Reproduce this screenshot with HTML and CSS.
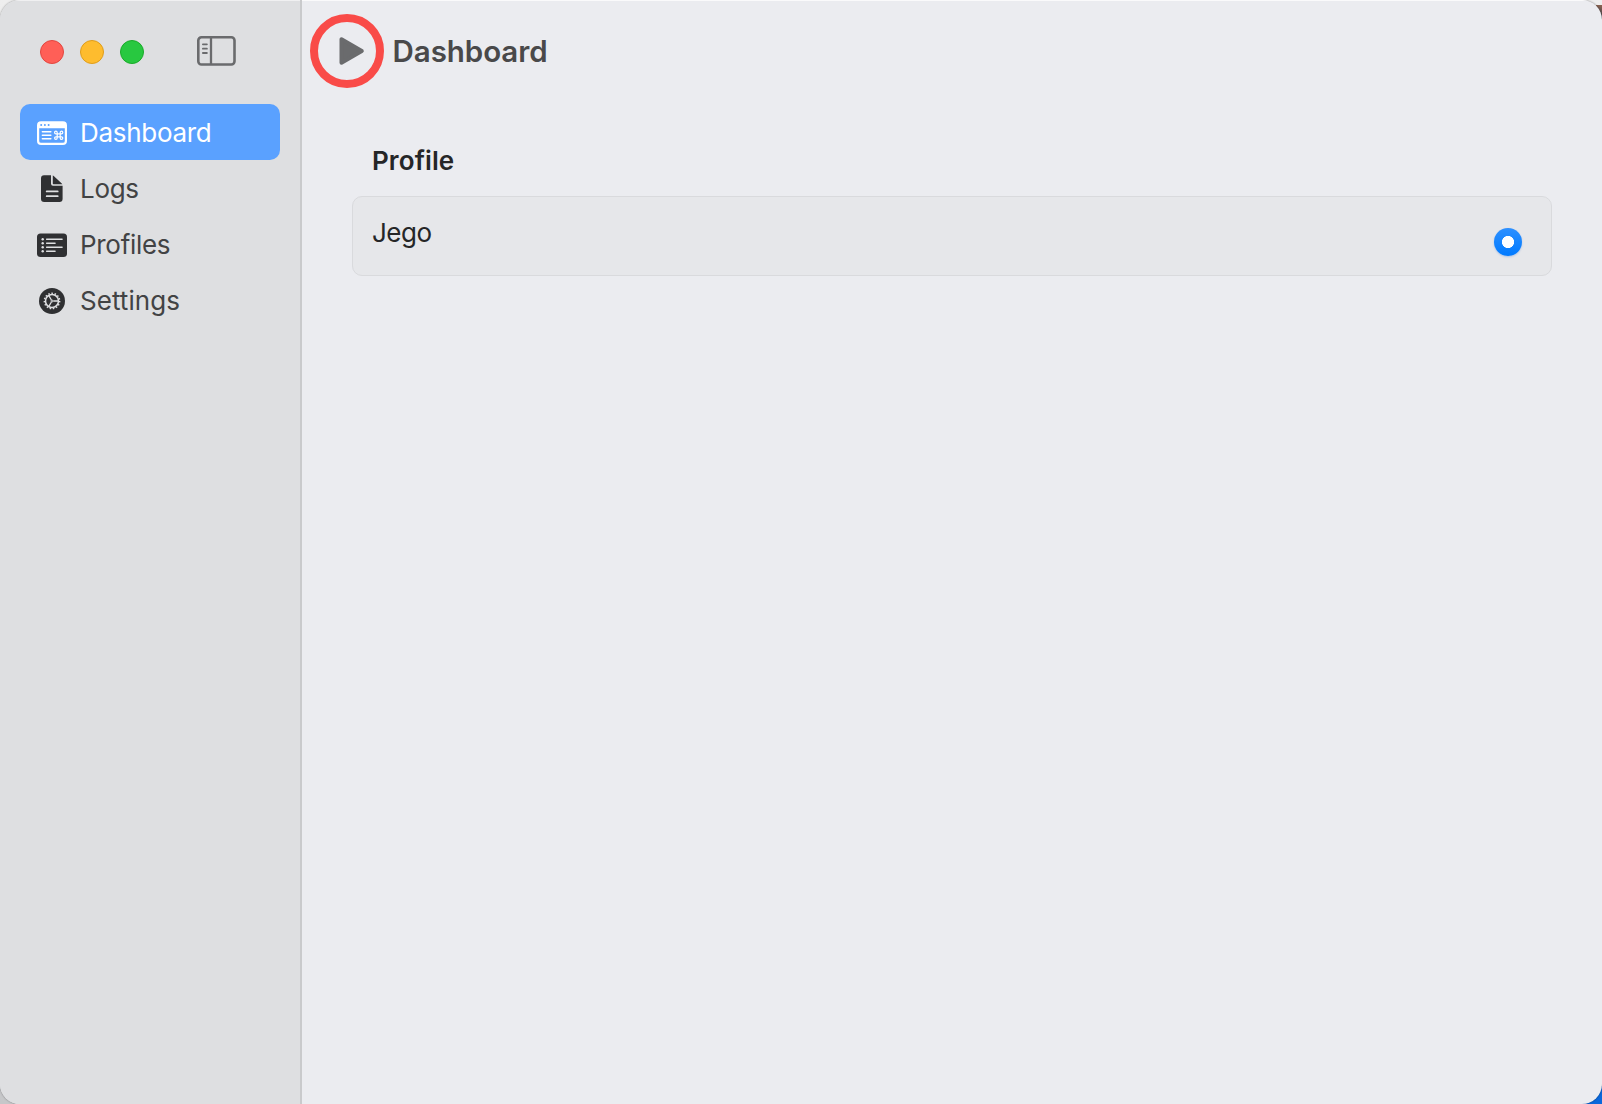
FILE: index.html
```html
<!DOCTYPE html>
<html lang="en">
<head>
<meta charset="utf-8">
<title>Dashboard</title>
<link rel="stylesheet" href="styles.css">
</head>
<body>
<div class="window">
  <aside class="sidebar">
    <div class="controls">
      <span class="light close"></span>
      <span class="light minimize"></span>
      <span class="light zoom"></span>
      <svg class="toggle" width="40" height="32" viewBox="0 0 40 32" fill="none" stroke="#6a6b6d">
        <rect x="2.3" y="2.3" width="36.2" height="27.2" rx="3.2" stroke-width="2.6"/>
        <path d="M15 2v28" stroke-width="2.3"/>
        <path d="M6.9 9.3h4M6.9 13.7h4M6.9 18h4" stroke-width="1.8" stroke-linecap="round"/>
      </svg>
    </div>
    <nav class="menu">
      <a class="item active">
        <svg class="icon" width="30" height="30" viewBox="0 0 30 30">
          <rect x="1.1" y="4.4" width="27.8" height="21.5" rx="3" fill="none" stroke="#fff" stroke-width="2.2"/>
          <path d="M1 10.2V7q0-3 3-3h22q3 0 3 3v3.2z" fill="#fff"/>
          <g fill="#5aa1ff"><circle cx="4.2" cy="6.9" r="1"/><circle cx="7.9" cy="6.9" r="1"/><circle cx="11.600" cy="6.900" r="1"/></g>
          <path d="M5.400 13.800h8.400M5.400 17.300h8.400M5.400 20.800h8.400" stroke="#fff" stroke-width="1.600" stroke-linecap="round"/>
          <path d="M20.200 15.800h3v3h-3zM20.200 15.800h-1.300a1.300 1.300 0 1 1 1.300-1.300zM23.200 15.800h1.300a1.300 1.300 0 1 0-1.300-1.300zM20.200 18.800h-1.300a1.300 1.300 0 1 0 1.300 1.300zM23.200 18.800h1.300a1.300 1.300 0 1 1-1.300 1.300z" fill="none" stroke="#fff" stroke-width="1.200"/>
        </svg>
        <span class="wide">Dashboard</span>
      </a>
      <a class="item">
        <svg class="icon" width="30" height="30" viewBox="0 0 30 30">
          <path d="M7 1.200h7v8.600q0 2 2 2h9.600v13q0 3.300-3.200 3.300H7.200Q4 28.100 4 24.800V4.400Q4 1.200 7 1.200z" fill="#2f3032"/>
          <path d="M15.800 1.400q.6.200 1.200.8l7.500 7q.6.500.8 1H16.500q-.7 0-.7-.7z" fill="#2f3032"/>
          <path d="M9.700 17.400h11M9.700 22.200h11" stroke="#dedfe1" stroke-width="1.800" stroke-linecap="round"/>
        </svg>
        <span>Logs</span>
      </a>
      <a class="item">
        <svg class="icon" width="30" height="30" viewBox="0 0 30 30">
          <rect y="3.500" width="30" height="23.500" rx="3.500" fill="#2f3032"/>
          <path d="M9.600 9.300h15.500M9.600 13.300h8.500M9.600 17.300h15.500M9.600 21.300h8.500" stroke="#dedfe1" stroke-width="1.400" stroke-linecap="round"/>
          <g fill="#dedfe1"><circle cx="5.700" cy="9.300" r="1.200"/><circle cx="5.700" cy="13.300" r="1.200"/><circle cx="5.700" cy="17.300" r="1.200"/><circle cx="5.700" cy="21.300" r="1.200"/></g>
        </svg>
        <span>Profiles</span>
      </a>
      <a class="item">
        <svg class="icon" width="30" height="30" viewBox="0 0 30 30">
          <circle cx="15" cy="15" r="13" fill="#2f3032"/>
          <g fill="none" stroke="#dedfe1">
            <circle cx="15" cy="15" r="7.700" stroke-width="1.400" stroke-dasharray="1.500 1.725"/>
            <circle cx="15" cy="15" r="6.500" stroke-width="1.500"/>
            <circle cx="15" cy="15" r="1" stroke-width="1"/>
            <path d="M16.300 15h5M14.400 14l-2.700-4.600M14.400 16l-2.700 4.600" stroke-width="1.300"/>
          </g>
        </svg>
        <span class="settings">Settings</span>
      </a>
    </nav>
  </aside>
  <main class="content">
    <header class="toolbar">
      <span class="run">
        <svg width="28" height="32" viewBox="0 0 28 32"><path d="M3.500 4.300v23.400l20.300-11.700z" fill="#6a6b6d" stroke="#6a6b6d" stroke-width="4" stroke-linejoin="round"/></svg>
      </span>
      <h1 class="title">Dashboard</h1>
    </header>
    <section class="group">
      <h2 class="heading">Profile</h2>
      <div class="card">
        <span class="name">Jego</span>
        <span class="radio"></span>
      </div>
    </section>
  </main>
</div>
</body>
</html>
```
FILE: styles.css
```css
* { box-sizing: border-box; }
body {
  margin: 0;
  background:
    linear-gradient(#0a68dc, #0a68dc) right bottom / 20px 18px no-repeat,
    linear-gradient(#8a6352, #39414f) right 5px / 6px 14px no-repeat,
    linear-gradient(#eeeeee, #c6c7c9);
  font-family: Inter, "Liberation Sans", sans-serif;
}
.window {
  display: flex;
  width: 1602px;
  height: 1104px;
  overflow: hidden;
  border-radius: 20px;
  background: #ebecf0;
  box-shadow: 0 0 2px rgba(0, 0, 0, .45);
}
.sidebar {
  width: 302px;
  padding: 35px 20px 0;
  background: #dedfe1;
  border-right: 2px solid #c9cacc;
  box-shadow: inset 0 1px 0 #f0f0f1;
}
.controls {
  display: flex;
  align-items: center;
  gap: 16px;
  height: 34px;
  padding-left: 20px;
}
.light {
  width: 24px;
  height: 24px;
  border: 1px solid;
  border-radius: 50%;
}
.close { background: #ff5f57; border-color: #e2463f; }
.minimize { background: #febc2e; border-color: #df9d1b; }
.zoom { background: #28c840; border-color: #1aab29; }
.toggle { margin: -3px 0 0 36px; }
.menu { margin-top: 35px; }
.item {
  display: flex;
  align-items: center;
  gap: 13px;
  width: 260px;
  height: 56px;
  padding: 2px 17px 0;
  border-radius: 10px;
  color: #424344;
  font-size: 26px;
  letter-spacing: -.3px;
  line-height: 32px;
}
.item.active { background: #5aa1ff; color: #fff; }
.settings { letter-spacing: .05px; }
.content {
  flex: 1;
  box-shadow: inset 0 1px 0 #fafafb;
}
.toolbar {
  display: flex;
  align-items: center;
  gap: 8.5px;
  height: 102px;
  padding-left: 8px;
}
.run {
  display: flex;
  align-items: center;
  justify-content: center;
  width: 74px;
  height: 74px;
  padding-left: 10px;
  border: 8px solid #f94b48;
  border-radius: 50%;
}
.title {
  margin: 0;
  color: #49494a;
  font-size: 29.5px;
  font-weight: 600;
  letter-spacing: -.05px;
  line-height: 36px;
}
.group { padding: 43px 50px 0; }
.heading {
  margin: 0 0 19px 20px;
  color: #252627;
  font-size: 26px;
  font-weight: 600;
  letter-spacing: .1px;
  line-height: 32px;
}
.card {
  display: flex;
  justify-content: space-between;
  height: 80px;
  padding: 20px 29px 0 19px;
  border: 1px solid #d9dadd;
  border-radius: 10px;
  background: #e6e7ea;
  color: #252627;
  font-size: 26px;
  letter-spacing: -.5px;
  line-height: 32px;
}
.radio {
  width: 28px;
  height: 28px;
  margin-top: 11px;
  border-radius: 50%;
  background: radial-gradient(circle, #fff 5.700px, transparent 6.400px), linear-gradient(#2d90ff, #007aff);
  box-shadow: 0 1px 2px rgba(0, 90, 220, .25);
}
```
